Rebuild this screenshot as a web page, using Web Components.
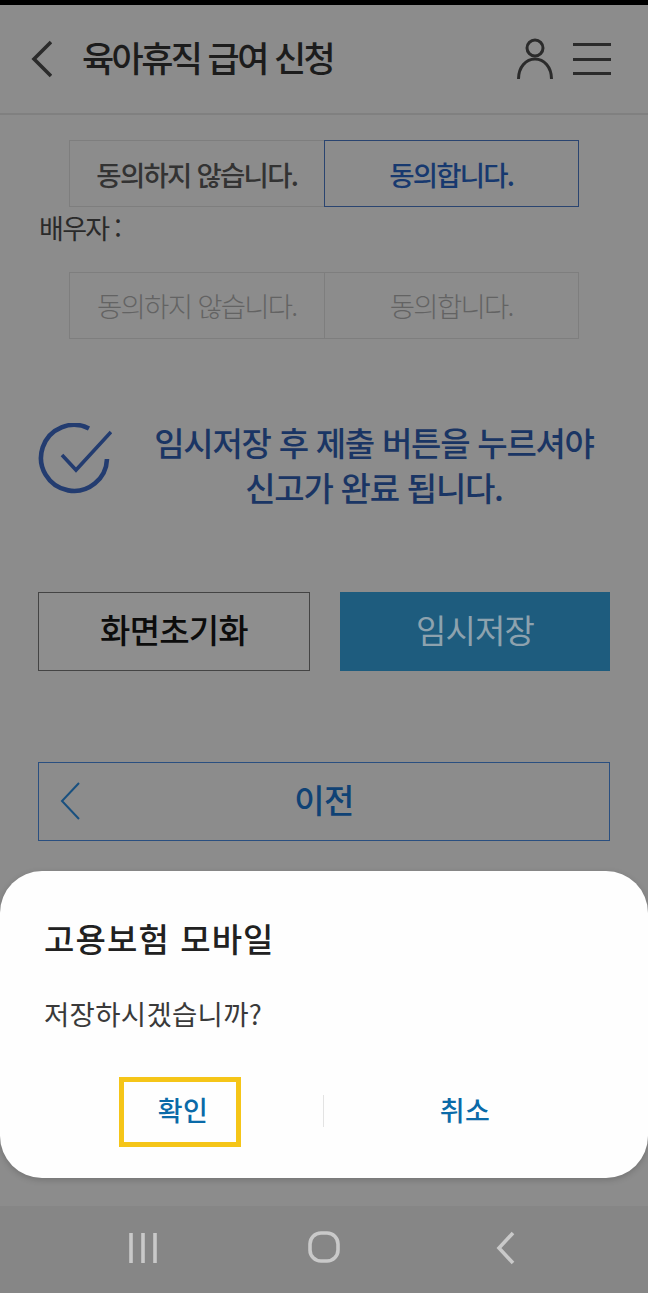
<!DOCTYPE html>
<html lang="ko"><head><meta charset="utf-8"><title>육아휴직 급여 신청</title>
<style>
html,body{margin:0;padding:0;background:#8c8c8c}
body{width:648px;height:1293px;overflow:hidden;font-family:"Noto Sans CJK KR","Noto Sans",sans-serif}
</style></head><body>
<app-screen>
  <app-header title="육아휴직 급여 신청"></app-header>
  <agree-group selected></agree-group>
  <section-label>배우자 :</section-label>
  <agree-group disabled></agree-group>
  <save-notice></save-notice>
  <action-row></action-row>
  <prev-button></prev-button>
  <nav-bar></nav-bar>
  <confirm-dialog></confirm-dialog>
</app-screen>
<script>
function def(name, html, init){
  customElements.define(name, class extends HTMLElement{
    constructor(){super();this.attachShadow({mode:'open'}).innerHTML=html;}
    connectedCallback(){ if(init) init(this,this.shadowRoot); }
  });
}
const font='font-family:"Noto Sans CJK KR","Noto Sans",sans-serif;';
def('app-screen',`<style>
:host{display:flex;flex-direction:column;position:relative;width:648px;height:1293px;background:#8c8c8c;overflow:hidden;border-top:5px solid #000;box-sizing:border-box;${font}}
</style><slot></slot>`);
def('app-header',`<style>
:host{display:flex;align-items:center;height:110px;box-sizing:border-box;border-bottom:2px solid #808080;padding:0 37px 0 30px;flex:none}
h1{margin:0 0 0 30px;font-size:35px;font-weight:500;letter-spacing:-2.6px;color:#1c1c1c;flex:1;line-height:40px;white-space:nowrap;position:relative;top:-2px}
svg{display:block;flex:none}
.gap{width:20px;flex:none}
</style>
<svg width="22" height="44" viewBox="0 0 22 44"><path d="M21 5 L4 22 L21 39" fill="none" stroke="#2b2b2b" stroke-width="3.6"/></svg>
<h1 id="t"></h1>
<svg width="36" height="42" viewBox="0 0 36 42"><circle cx="18" cy="10" r="8" fill="none" stroke="#2b2b2b" stroke-width="3"/><path d="M1.5 41 C1.5 29 9 21 18 21 C27 21 34.5 29 34.5 41" fill="none" stroke="#2b2b2b" stroke-width="3"/></svg>
<span class="gap"></span>
<svg width="38" height="34" viewBox="0 0 38 34"><path d="M0 2.5H38M0 17.5H38M0 31.5H38" stroke="#2b2b2b" stroke-width="3"/></svg>`,
(h,s)=>{s.getElementById('t').textContent=h.getAttribute('title')});
def('agree-group',`<style>
:host{display:flex;flex:none;margin:25px 69px 0;height:67px;width:510px;font-size:27.5px;letter-spacing:-1.75px;font-weight:400;color:#2e2e2e}
div{flex:1;display:flex;align-items:center;justify-content:center;box-sizing:border-box;border:1px solid #7e7e7e;white-space:nowrap}
div+div{margin-left:-1px}
:host([selected]) .yes{border-color:#2a4470;color:#17396f;position:relative;font-weight:500}
:host([disabled]){color:#636363;font-weight:300}
:host([disabled]) div{padding-bottom:2px}
:host([selected]) .no{font-weight:500;color:#333}
</style><div class="no">동의하지 않습니다.</div><div class="yes">동의합니다.</div>`);
def('section-label',`<style>
:host{display:block;flex:none;margin:2px 0 0 39px;height:38px;line-height:38px;font-size:27px;letter-spacing:-1.7px;color:#2a2a2a;font-weight:400}
</style><slot></slot>`);
def('save-notice',`<style>
:host{display:flex;flex:none;align-items:flex-start;margin:81px 38px 0 38px;height:90px;color:#1a3564}
svg{flex:none;display:block;margin-top:3px}
p{margin:0;flex:1;text-align:center;font-size:33px;line-height:45px;letter-spacing:-1.25px;font-weight:500;white-space:nowrap;padding-left:26px}
</style>
<svg width="74" height="72" viewBox="0 0 74 72"><path d="M51 5.5 A33 33 0 1 0 69 36" fill="none" stroke="#233c70" stroke-width="4.6"/><path d="M24 32 L38 47 L73 9" fill="none" stroke="#233c70" stroke-width="3.6"/></svg>
<p>임시저장 후 제출 버튼을 누르셔야<br>신고가 완료 됩니다.</p>`);
def('action-row',`<style>
:host{display:flex;flex:none;gap:30px;margin:82px 38px 0;height:79px;font-size:33px}
div{flex:1;display:flex;align-items:center;justify-content:center;box-sizing:border-box;letter-spacing:-.8px;padding-bottom:5px}
.a{border:1px solid #444;color:#0c0c0c;font-weight:500;background:#8e8e8e}
.b{background:#1e5c7e;color:#8da2ae;font-weight:400}
</style><div class="a">화면초기화</div><div class="b">임시저장</div>`);
def('prev-button',`<style>
:host{display:flex;flex:none;position:relative;align-items:center;justify-content:center;margin:91px 38px 0;height:79px;box-sizing:border-box;border:1px solid #2a4f80;color:#0f4275;font-size:33px;font-weight:500;letter-spacing:-.5px;padding-bottom:5px}
svg{position:absolute;left:20px;top:19px}
</style><svg width="22" height="38" viewBox="0 0 22 38"><path d="M20 1 L3 19 L20 37" fill="none" stroke="#19507f" stroke-width="2"/></svg>이전`);
def('nav-bar',`<style>
:host{display:block;flex:none;margin-top:auto;height:87px;background:#868686;position:relative}
svg{position:absolute;display:block}
</style>
<svg style="left:128px;top:26px" width="32" height="32" viewBox="0 0 32 32"><path d="M3 1V31M15 1V31M27 1V31" stroke="#c9c9c9" stroke-width="3.6" fill="none"/></svg>
<svg style="left:307px;top:25px" width="34" height="33" viewBox="0 0 34 33"><rect x="3" y="2" width="28" height="28" rx="11" fill="none" stroke="#c9c9c9" stroke-width="3.6"/></svg>
<svg style="left:495px;top:25px" width="22" height="34" viewBox="0 0 22 34"><path d="M18 2 L4 17 L18 32" fill="none" stroke="#c9c9c9" stroke-width="3.6"/></svg>`);
def('confirm-dialog',`<style>
:host{position:absolute;left:0;right:0;top:866px;height:307px;background:#fefefe;border-radius:42px;box-shadow:0 2px 6px rgba(0,0,0,.18);padding:0 44px;box-sizing:border-box;display:block;color:#212121}
h2{margin:0;padding-top:45px;font-size:33px;line-height:44px;font-weight:500;letter-spacing:1.1px;white-space:nowrap}
p{margin:35px 0 0;font-size:27.5px;line-height:36px;font-weight:400;letter-spacing:.3px;color:#3a3a3a;white-space:nowrap}
.row{position:absolute;left:0;right:0;top:206px;height:70px}
.btn{font-size:27px;font-weight:500;color:#0a6aa8;text-align:center;line-height:66px;letter-spacing:.4px}
.sep{position:absolute;left:323px;top:18px;width:1px;height:32px;background:#e3e3e3}
.hl{position:absolute;left:119px;top:0;width:122px;height:70px;box-sizing:border-box;border:5px solid #f5c518}
.ok{position:absolute;left:119px;top:0;width:128px}
.no{position:absolute;left:425px;top:0;width:80px}
</style>
<h2>고용보험 모바일</h2><p>저장하시겠습니까?</p>
<div class="row"><div class="hl"></div><div class="btn ok">확인</div><div class="sep"></div><div class="btn no">취소</div></div>`);
</script>
</body></html>
